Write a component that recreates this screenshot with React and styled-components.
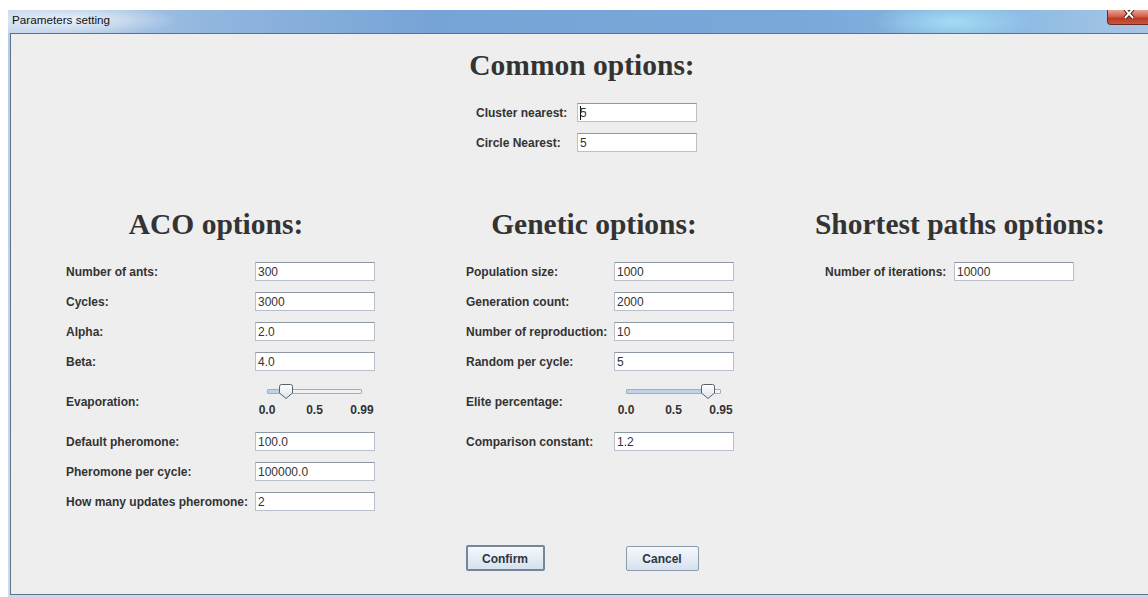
import React from 'react';
import styled, { createGlobalStyle } from 'styled-components';

const GlobalStyle = createGlobalStyle`
  html, body {
    margin: 0;
    padding: 0;
    background: #ffffff;
    overflow: hidden;
  }
  body {
    font-family: "Liberation Sans", Arial, sans-serif;
  }
`;

const Window = styled.div`
  margin: 10px 0 0 8px;
  width: 1145px;
  display: flex;
  flex-direction: column;
`;

const TitleBar = styled.div`
  height: 23px;
  display: flex;
  align-items: flex-start;
  overflow: hidden;
  background:
    radial-gradient(ellipse 110px 16px at 60px 10px, rgba(236, 242, 248, 0.95), rgba(236, 242, 248, 0)),
    radial-gradient(ellipse 80px 20px at 945px 12px, rgba(165, 222, 246, 0.95), rgba(165, 222, 246, 0)),
    linear-gradient(to right, #c4d7ec 0px, #93b7df 190px, #77a4d6 420px, #7aa8d9 800px, #8bbae3 1000px, #a9c5e5 1145px);
`;

const Title = styled.span`
  padding: 3px 0 0 4px;
  font: 11.7px/14px "Liberation Sans", Arial, sans-serif;
  color: #111111;
`;

const CloseButton = styled.div`
  margin-left: auto;
  margin-right: 2px;
  width: 44px;
  height: 15px;
  box-sizing: border-box;
  display: flex;
  justify-content: center;
  border: 1px solid #70291f;
  border-top: none;
  border-radius: 0 0 4px 4px;
  background: linear-gradient(#e9a596, #d2614c 45%, #bb3b27 60%, #c8573f);
`;

const Frame = styled.div`
  padding: 0 0 3px 2px;
  background: linear-gradient(#b3cce8, #c9dcf0);
`;

const Content = styled.div`
  height: 562px;
  box-sizing: border-box;
  border: 1px solid #5f7185;
  border-right: none;
  background: #eeeeee;
  padding-top: 14px;
  display: flex;
  flex-direction: column;
`;

const Heading = styled.h2`
  margin: 0;
  font: bold 29.5px/34px "Liberation Serif", "Times New Roman", serif;
  color: #333333;
  text-align: center;
  white-space: nowrap;
`;

const Form = styled.div`
  display: grid;
  row-gap: 11px;
  margin-top: 21px;
  margin-left: ${(p) => p.$inset}px;
`;

const CenteredForm = styled(Form)`
  margin: 21px auto 0;
  padding-left: 9px;
`;

const Row = styled.div`
  display: grid;
  grid-template-columns: ${(p) => p.$labelWidth}px 120px;
  align-items: center;
  min-height: 19px;
`;

const Label = styled.span`
  font: bold 12px/14px "Liberation Sans", Arial, sans-serif;
  color: #333333;
  white-space: nowrap;
`;

const Field = styled.div`
  width: 120px;
  height: 19px;
  box-sizing: border-box;
  padding: 1px 2px 0;
  border: 1px solid #b8c0cb;
  border-top-color: #8e98a5;
  background: #ffffff;
  font: 12px/16px "Liberation Sans", Arial, sans-serif;
  color: #333333;
  display: flex;
  align-items: center;
`;

const Caret = styled.span`
  width: 1px;
  height: 14px;
  margin-right: -1px;
  background: #111111;
`;

const Columns = styled.div`
  display: grid;
  grid-template-columns: 410px 346px 1fr;
  margin-top: 55px;
`;

const Column = styled.div`
  display: flex;
  flex-direction: column;
`;

const SliderBox = styled.div`
  position: relative;
  width: 120px;
  height: 39px;
  box-sizing: border-box;
  padding-left: 12px;
`;

const Track = styled.div`
  margin-top: 7px;
  width: 95px;
  height: 5px;
  box-sizing: border-box;
  border: 1px solid #a2aebc;
  border-radius: 1px;
`;

const Thumb = styled.svg`
  position: absolute;
  top: 2px;
  display: block;
`;

const TickRow = styled.div`
  margin-top: 9px;
  width: 95px;
  display: flex;
  justify-content: space-between;
`;

const Tick = styled.span`
  width: 0;
  display: flex;
  justify-content: center;
  white-space: nowrap;
  font: bold 12px/14px "Liberation Sans", Arial, sans-serif;
  color: #333333;
`;

const ButtonRow = styled.div`
  display: flex;
  justify-content: center;
  align-items: center;
  gap: 81px;
  margin-top: 34px;
`;

const Button = styled.button`
  width: ${(p) => p.$width}px;
  height: ${(p) => (p.$focused ? 26 : 25)}px;
  box-sizing: border-box;
  padding: 1px 0 0;
  border: ${(p) => (p.$focused ? '2px solid #75869a' : '1px solid #8c9bac')};
  border-radius: 2px;
  background: linear-gradient(#f5f8fc, #e6edf5 50%, #d6e1ee);
  font: bold 12px/14px "Liberation Sans", Arial, sans-serif;
  color: #2b3644;
`;

const Slider = ({ value, max, ticks }) => {
  const fraction = value / max;
  const fill = Math.round(fraction * 100);
  return (
    <SliderBox>
      <Track
        style={{
          background: `linear-gradient(to right, #c0d2ea 0 ${fill}%, #eef1f5 ${fill}% 100%)`,
        }}
      />
      <Thumb width="14" height="15" viewBox="0 0 14 15" style={{ left: 12 + fraction * 81 }}>
        <defs>
          <linearGradient id="thumbFill" x1="0" y1="0" x2="0" y2="1">
            <stop offset="0" stopColor="#ffffff" />
            <stop offset="1" stopColor="#dbe2ea" />
          </linearGradient>
        </defs>
        <path
          d="M2.5 0.5 H11.5 Q13.5 0.5 13.5 2.5 V9 L7 14.5 L0.5 9 V2.5 Q0.5 0.5 2.5 0.5 Z"
          fill="url(#thumbFill)"
          stroke="#56616e"
        />
      </Thumb>
      <TickRow>
        {ticks.map((t) => (
          <Tick key={t}>{t}</Tick>
        ))}
      </TickRow>
    </SliderBox>
  );
};

const aco = [
  { label: 'Number of ants:', value: '300' },
  { label: 'Cycles:', value: '3000' },
  { label: 'Alpha:', value: '2.0' },
  { label: 'Beta:', value: '4.0' },
  { label: 'Evaporation:', slider: { value: 0.15, max: 1, ticks: ['0.0', '0.5', '0.99'] } },
  { label: 'Default pheromone:', value: '100.0' },
  { label: 'Pheromone per cycle:', value: '100000.0' },
  { label: 'How many updates pheromone:', value: '2' },
];

const genetic = [
  { label: 'Population size:', value: '1000' },
  { label: 'Generation count:', value: '2000' },
  { label: 'Number of reproduction:', value: '10' },
  { label: 'Random per cycle:', value: '5' },
  { label: 'Elite percentage:', slider: { value: 0.925, max: 1, ticks: ['0.0', '0.5', '0.95'] } },
  { label: 'Comparison constant:', value: '1.2' },
];

const shortest = [{ label: 'Number of iterations:', value: '10000' }];

const OptionRows = ({ items, labelWidth }) =>
  items.map((item) => (
    <Row key={item.label} $labelWidth={labelWidth}>
      <Label>{item.label}</Label>
      {item.slider ? <Slider {...item.slider} /> : <Field>{item.value}</Field>}
    </Row>
  ));

const App = () => (
  <>
    <GlobalStyle />
    <Window>
      <TitleBar>
        <Title>Parameters setting</Title>
        <CloseButton>
          <svg width="12" height="9" viewBox="0 0 12 9">
            <path d="M2 -1 L10 8 M10 -1 L2 8" stroke="#4a1a14" strokeWidth="4" />
            <path d="M2 -1 L10 8 M10 -1 L2 8" stroke="#ffffff" strokeWidth="2" />
          </svg>
        </CloseButton>
      </TitleBar>
      <Frame>
        <Content>
          <Heading>Common options:</Heading>
          <CenteredForm>
            <Row $labelWidth={101}>
              <Label>Cluster nearest:</Label>
              <Field>
                <Caret />5
              </Field>
            </Row>
            <Row $labelWidth={101}>
              <Label>Circle Nearest:</Label>
              <Field>5</Field>
            </Row>
          </CenteredForm>

          <Columns>
            <Column>
              <Heading>ACO options:</Heading>
              <Form $inset={55}>
                <OptionRows items={aco} labelWidth={189} />
              </Form>
            </Column>
            <Column>
              <Heading>Genetic options:</Heading>
              <Form $inset={45}>
                <OptionRows items={genetic} labelWidth={148} />
              </Form>
            </Column>
            <Column>
              <Heading>Shortest paths options:</Heading>
              <Form $inset={58}>
                <OptionRows items={shortest} labelWidth={129} />
              </Form>
            </Column>
          </Columns>

          <ButtonRow>
            <Button $width={79} $focused>
              Confirm
            </Button>
            <Button $width={73}>Cancel</Button>
          </ButtonRow>
        </Content>
      </Frame>
    </Window>
  </>
);

export default App;
